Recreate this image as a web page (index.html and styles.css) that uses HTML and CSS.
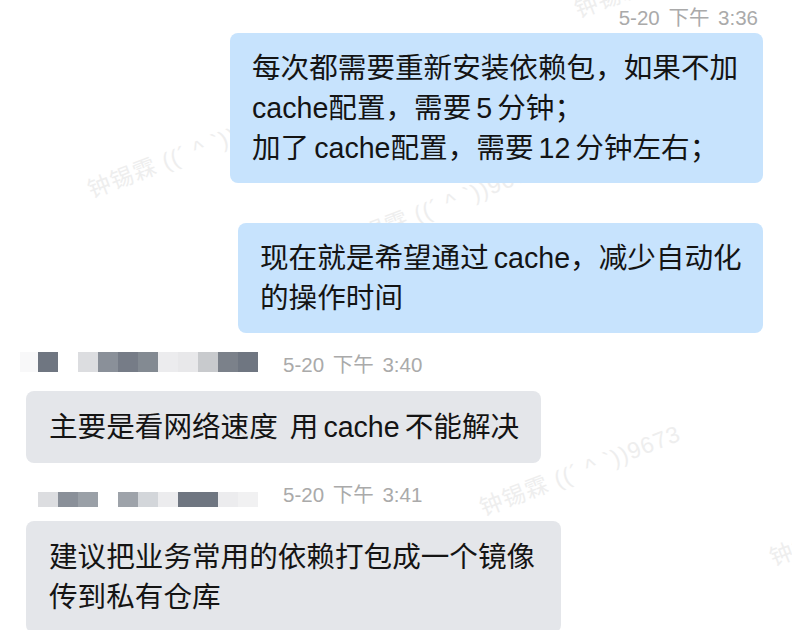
FILE: index.html
```html
<!DOCTYPE html>
<html lang="zh-CN">
<head>
<meta charset="utf-8">
<title>Chat</title>
<link rel="stylesheet" href="styles.css">
</head>
<body>
<div class="screen">
  <div class="watermarks" aria-hidden="true">
    <span class="wm wm-a">钟锡霖 ((´ ^ `))9673</span>
    <span class="wm wm-b">钟锡霖 ((´ ^ `))9673</span>
    <span class="wm wm-c">钟锡霖 ((´ ^ `))9673</span>
    <span class="wm wm-d">钟锡霖 ((´ ^ `))9673</span>
    <span class="wm wm-e">钟锡霖 ((´ ^ `))9673</span>
    <span class="wm wm-f">钟锡霖 ((´ ^ `))9673</span>
  </div>
  <div class="chat">
    <div class="msg msg-self">
      <div class="time time-self">5-20 下午 3:36</div>
      <div class="bubble bubble-blue b1">每次都需要重新安装依赖包，如果不加<br>cache配置，需要<span class="gap"></span>5<span class="gap"></span>分钟；<br>加了<span class="gap"></span>cache配置，需要<span class="gap"></span>12<span class="gap"></span>分钟左右；</div>
    </div>
    <div class="msg msg-self m2">
      <div class="bubble bubble-blue b2">现在就是希望通过<span class="gap"></span>cache，减少自动化<br>的操作时间</div>
    </div>
    <div class="msg msg-other m3">
      <div class="sender sender-a">
        <div class="name name-a">
          <i class="px ghost"></i><i class="px c-d1"></i><i class="px c-w"></i><i class="px c-l1"></i><i class="px c-m1"></i><i class="px c-d2"></i><i class="px c-m2"></i><i class="px c-l2"></i><i class="px c-l3"></i><i class="px c-l4"></i><i class="px c-d3"></i><i class="px c-d1"></i>
        </div>
        <div class="time">5-20 下午 3:40</div>
      </div>
      <div class="bubble bubble-gray b3">主要是看网络速度<span class="gap gap-wide"></span>用<span class="gap"></span>cache<span class="gap"></span>不能解决</div>
    </div>
    <div class="msg msg-other m4">
      <div class="sender sender-b">
        <div class="name name-b">
          <i class="px c-l1"></i><i class="px c-m1"></i><i class="px c-m3"></i><i class="px c-w"></i><i class="px c-m4"></i><i class="px c-l5"></i><i class="px c-l2"></i><i class="px px-wide c-d1"></i><i class="px c-l2"></i><i class="px c-l6"></i>
        </div>
        <div class="time">5-20 下午 3:41</div>
      </div>
      <div class="bubble bubble-gray b4">建议把业务常用的依赖打包成一个镜像<br>传到私有仓库</div>
    </div>
  </div>
</div>
</body>
</html>
```
FILE: styles.css
```css
* { box-sizing: border-box; }
html, body { margin: 0; padding: 0; background: #ffffff; }
body {
  font-family: "Liberation Sans", "Noto Sans CJK SC", sans-serif;
  color: #141414;
}
.screen {
  position: relative;
  width: 792px;
  height: 630px;
  overflow: hidden;
  background: #ffffff;
}
.watermarks {
  position: absolute;
  inset: 0;
  z-index: 0;
}
.wm {
  position: absolute;
  font-size: 23px;
  line-height: 23px;
  letter-spacing: 1px;
  color: #eeeeee;
  white-space: nowrap;
  transform-origin: 0 100%;
  transform: rotate(-21deg);
}
.wm-a { left: 93px; top: 179px; }
.wm-b { left: 345px; top: 232px; }
.wm-c { left: 485px; top: 497px; }
.wm-d { left: 580px; top: -1px; }
.wm-e { left: 775px; top: 547px; }
.wm-f { left: -215px; top: 137px; }

.chat {
  position: relative;
  z-index: 1;
  display: flex;
  flex-direction: column;
  padding: 6px 29px 0 26px;
}
.msg { display: flex; flex-direction: column; }
.msg-self { align-items: flex-end; }
.msg-other { align-items: flex-start; }

.time {
  font-size: 20.5px;
  line-height: 22px;
  color: #aaaaaa;
  word-spacing: 3px;
  white-space: nowrap;
}
.time-self { margin-right: 5px; margin-top: 1px; }

.bubble {
  font-size: 28.6px;
  line-height: 40px;
  padding: 15px 22px;
  border-radius: 8px;
  white-space: nowrap;
}
.gap { display: inline-block; width: 5px; }
.gap-wide { width: 12px; }
.bubble-blue { background: #c7e3fd; }
.bubble-gray { background: #e4e6ea; }
.b1 { width: 533px; margin-top: 4px; }
.b2 { width: 525px; margin-top: 40px; }
.b3 { width: 515px; margin-top: 15px; padding: 16px 23px; }
.b4 { width: 535px; margin-top: 14px; padding: 16px 23px; }

.sender { display: flex; align-items: flex-start; padding-left: 12px; }
.sender-a { margin-top: 17px; }
.sender-a .name { margin-top: 2px; }
.sender-a .time { margin-top: 4px; margin-left: 25px; }
.m4 .sender { margin-top: 21px; }
.sender-b .name { margin-top: 8px; }
.sender-b .time { margin-left: 25px; }

.name { display: flex; }
.px { display: block; width: 20px; }
.name-a .px { height: 20px; }
.name-b .px { height: 15px; }
.px-wide { width: 40px; }
.ghost { width: 18px; margin-left: -18px; background: #f8f8f9; }
.c-w  { background: #ffffff; }
.c-d1 { background: #6f7681; }
.c-d2 { background: #767c87; }
.c-d3 { background: #7b818a; }
.c-m1 { background: #8a9099; }
.c-m2 { background: #838a92; }
.c-m3 { background: #9aa0a7; }
.c-m4 { background: #9ea3aa; }
.c-l1 { background: #dcdde0; }
.c-l2 { background: #ececee; }
.c-l3 { background: #e8e8ea; }
.c-l4 { background: #c8cacd; }
.c-l5 { background: #d3d6da; }
.c-l6 { background: #f1f1f2; }
```
